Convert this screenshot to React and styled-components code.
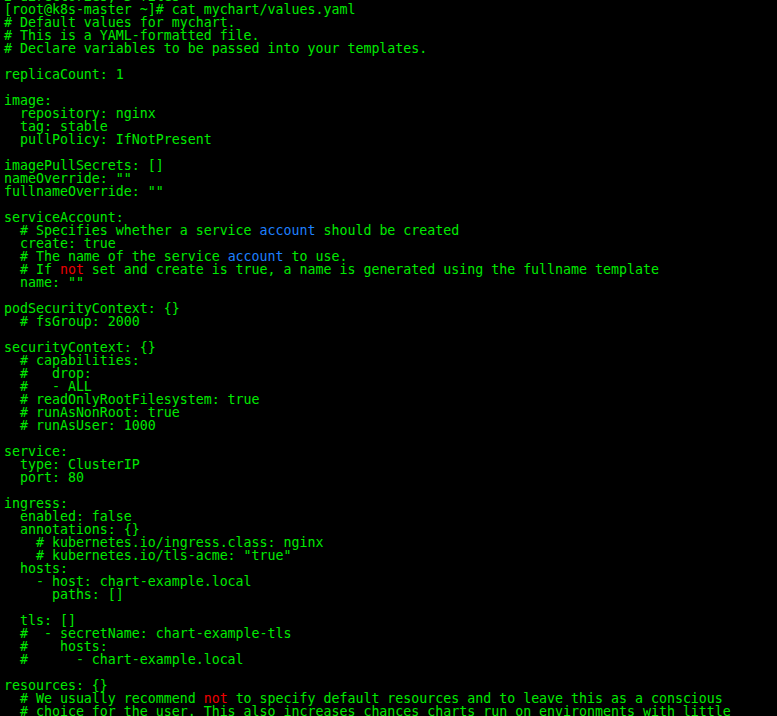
import React from 'react'
import styled, { createGlobalStyle } from 'styled-components'

const GlobalStyle = createGlobalStyle`
  html, body {
    margin: 0;
    padding: 0;
    background: #000;
  }
`

const Screen = styled.div`
  width: 777px;
  height: 716px;
  overflow: hidden;
  background: #000;
  padding-left: 4px;
  box-sizing: border-box;
`

const Output = styled.pre`
  margin: -10.5px 0 0 0;
  font-family: "DejaVu Sans Mono", "Liberation Mono", monospace;
  font-size: 13.28px;
  line-height: 13.02px;
  color: #00ea00;
  white-space: pre;
`

const Line = styled.div`
  height: 13.02px;
`

const Word = styled.span`
  color: ${p => (p.$tone === 'red' ? '#ee0000' : p.$tone === 'blue' ? '#1e80ff' : 'inherit')};
`

const lines = [
  '2 directories, 3 files',
  '[root@k8s-master ~]# cat mychart/values.yaml',
  '# Default values for mychart.',
  '# This is a YAML-formatted file.',
  '# Declare variables to be passed into your templates.',
  '',
  'replicaCount: 1',
  '',
  'image:',
  '  repository: nginx',
  '  tag: stable',
  '  pullPolicy: IfNotPresent',
  '',
  'imagePullSecrets: []',
  'nameOverride: ""',
  'fullnameOverride: ""',
  '',
  'serviceAccount:',
  ['  # Specifies whether a service ', ['blue', 'account'], ' should be created'],
  '  create: true',
  ['  # The name of the service ', ['blue', 'account'], ' to use.'],
  ['  # If ', ['red', 'not'], ' set and create is true, a name is generated using the fullname template'],
  '  name: ""',
  '',
  'podSecurityContext: {}',
  '  # fsGroup: 2000',
  '',
  'securityContext: {}',
  '  # capabilities:',
  '  #   drop:',
  '  #   - ALL',
  '  # readOnlyRootFilesystem: true',
  '  # runAsNonRoot: true',
  '  # runAsUser: 1000',
  '',
  'service:',
  '  type: ClusterIP',
  '  port: 80',
  '',
  'ingress:',
  '  enabled: false',
  '  annotations: {}',
  '    # kubernetes.io/ingress.class: nginx',
  '    # kubernetes.io/tls-acme: "true"',
  '  hosts:',
  '    - host: chart-example.local',
  '      paths: []',
  '',
  '  tls: []',
  '  #  - secretName: chart-example-tls',
  '  #    hosts:',
  '  #      - chart-example.local',
  '',
  'resources: {}',
  ['  # We usually recommend ', ['red', 'not'], ' to specify default resources and to leave this as a conscious'],
  '  # choice for the user. This also increases chances charts run on environments with little',
]

const renderLine = l => {
  if (typeof l === 'string') return l || ' '
  return l.map((part, i) =>
    typeof part === 'string' ? part : <Word key={i} $tone={part[0]}>{part[1]}</Word>
  )
}

export default () => (
  <>
    <GlobalStyle />
    <Screen>
      <Output>
        {lines.map((l, i) => (
          <Line key={i}>{renderLine(l)}</Line>
        ))}
      </Output>
    </Screen>
  </>
)
